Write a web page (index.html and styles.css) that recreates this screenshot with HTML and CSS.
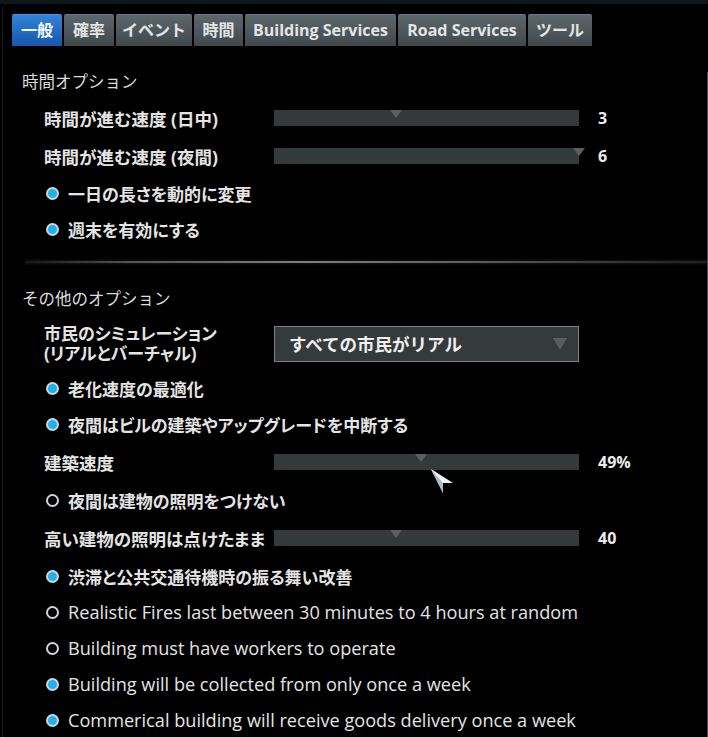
FILE: index.html
```html
<!DOCTYPE html>
<html lang="ja">
<head>
<meta charset="utf-8">
<title>Options</title>
<link rel="stylesheet" href="styles.css">
</head>
<body>
<div class="window">
  <div class="topbar"></div>
  <div class="frame">
    <nav class="tabs">
      <span class="tab tab-general active">一般</span>
      <span class="tab tab-prob">確率</span>
      <span class="tab tab-event">イベント</span>
      <span class="tab tab-time">時間</span>
      <span class="tab tab-building">Building Services</span>
      <span class="tab tab-road">Road Services</span>
      <span class="tab tab-tools">ツール</span>
    </nav>
    <div class="content">
      <h2 class="section-title">時間オプション</h2>
      <div class="row slider-row">
        <span class="label">時間が進む速度 (日中)</span>
        <div class="slider"><span class="thumb" style="left:40%"></span></div>
        <span class="value">3</span>
      </div>
      <div class="row slider-row">
        <span class="label">時間が進む速度 (夜間)</span>
        <div class="slider"><span class="thumb" style="left:100%"></span></div>
        <span class="value">6</span>
      </div>
      <div class="row check-row">
        <span class="radio on"></span><span class="check-text">一日の長さを動的に変更</span>
      </div>
      <div class="row check-row">
        <span class="radio on"></span><span class="check-text">週末を有効にする</span>
      </div>

      <div class="divider"></div>

      <h2 class="section-title second">その他のオプション</h2>
      <div class="row select-row">
        <div class="label-stack">
          <span class="stack-line">市民のシミュレーション</span>
          <span class="stack-line">(リアルとバーチャル)</span>
        </div>
        <div class="select">
          <span class="select-text">すべての市民がリアル</span>
          <span class="select-arrow"></span>
        </div>
      </div>
      <div class="row check-row">
        <span class="radio on"></span><span class="check-text">老化速度の最適化</span>
      </div>
      <div class="row check-row">
        <span class="radio on"></span><span class="check-text">夜間はビルの建築やアップグレードを中断する</span>
      </div>
      <div class="row slider-row tall">
        <span class="label">建築速度</span>
        <div class="slider"><span class="thumb" style="left:48.3%"></span></div>
        <span class="value">49%</span>
      </div>
      <div class="row check-row">
        <span class="radio"></span><span class="check-text">夜間は建物の照明をつけない</span>
      </div>
      <div class="row slider-row tall">
        <span class="label">高い建物の照明は点けたままにする</span>
        <div class="slider"><span class="thumb" style="left:40%"></span></div>
        <span class="value">40</span>
      </div>
      <div class="row check-row">
        <span class="radio on"></span><span class="check-text">渋滞と公共交通待機時の振る舞い改善</span>
      </div>
      <div class="row check-row">
        <span class="radio"></span><span class="check-text en">Realistic Fires last between 30 minutes to 4 hours at random</span>
      </div>
      <div class="row check-row">
        <span class="radio"></span><span class="check-text en">Building must have workers to operate</span>
      </div>
      <div class="row check-row">
        <span class="radio on"></span><span class="check-text en">Building will be collected from only once a week</span>
      </div>
      <div class="row check-row">
        <span class="radio on"></span><span class="check-text en">Commerical building will receive goods delivery once a week</span>
      </div>
    </div>
  </div>
  <svg class="cursor" width="26" height="28" viewBox="0 0 26 28">
    <polygon points="3,3 25,17 15,17 15,27" fill="#f2f5f7"/>
    <polygon points="3,3 15,17 15,27" fill="#a9bccb"/>
  </svg>
</div>
</body>
</html>
```

FILE: styles.css
```css
* { box-sizing: border-box; }

body {
  margin: 0;
  background: #000;
  font-family: "Open Sans", "Noto Sans CJK JP", sans-serif;
  color: #e2e2e2;
}

.window {
  position: relative;
  width: 708px;
  height: 737px;
  overflow: hidden;
  background: #000;
}

.window::after {
  content: "";
  position: absolute;
  right: 0;
  top: 72px;
  bottom: 0;
  width: 1px;
  background: #4c5153;
}

.topbar {
  height: 4px;
  background: #0f171b;
}

.frame {
  margin-left: 2px;
  border-left: 1px solid #161b1e;
  border-top-left-radius: 6px;
  height: 733px;
}

.tabs {
  display: flex;
  gap: 2px;
  padding: 10px 0 0 9px;
}

.tab {
  flex: none;
  height: 32px;
  line-height: 31px;
  text-align: center;
  font-size: 16px;
  font-weight: 700;
  color: #e2e5e5;
  background: linear-gradient(#5d676b, #40484c);
  border-top: 1px solid #6f787c;
  border-radius: 2px 2px 0 0;
  white-space: nowrap;
}

.tab.active {
  background: linear-gradient(#3183da, #1856ab);
  border-top-color: #4a92e0;
  color: #fff;
}

.tab-general { width: 50px; }
.tab-prob { width: 50px; }
.tab-event { width: 76px; }
.tab-time { width: 49px; }
.tab-building { width: 151px; }
.tab-road { width: 128px; }
.tab-tools { width: 64px; }

.content {
  padding-left: 19px;
}

.section-title {
  margin: 24px 0 5px;
  font-size: 16.5px;
  font-weight: 400;
  line-height: 24px;
  color: #dcdcdc;
}

.section-title.second {
  margin: 24px 0 6px;
}

.row {
  display: flex;
  align-items: center;
  padding-left: 22px;
}

.slider-row { height: 38px; }
.slider-row.tall { height: 40px; }
.check-row { height: 36px; }
.select-row { height: 53px; }

.label {
  width: 221px;
  margin-right: 9px;
  padding: 4px 0;
  overflow: hidden;
  white-space: nowrap;
  font-size: 17.5px;
  font-weight: 700;
  color: #e4e4e4;
  font-feature-settings: "palt";
}

.label-stack {
  display: flex;
  flex-direction: column;
  width: 221px;
  margin-right: 9px;
  font-size: 17px;
  font-weight: 700;
  color: #e4e4e4;
  font-feature-settings: "palt";
  white-space: nowrap;
}

.stack-line {
  display: block;
  height: 20px;
  line-height: 20px;
}

.slider {
  position: relative;
  flex: none;
  width: 305px;
  height: 16px;
  background: #343a3a;
}

.thumb {
  position: absolute;
  top: 0;
  width: 0;
  height: 0;
  border-left: 6px solid transparent;
  border-right: 6px solid transparent;
  border-top: 8px solid #5a6060;
  transform: translateX(-50%);
}

.value {
  margin-left: 19px;
  font-size: 16px;
  font-weight: 700;
  color: #ececec;
}

.radio {
  width: 13px;
  height: 13px;
  margin-left: 2px;
  margin-right: 9px;
  border-radius: 50%;
  border: 2.5px solid #cfd5d8;
  background: #000;
  flex: none;
}

.radio.on {
  border-width: 2px;
  background: #1fb0ef;
}

.check-text {
  font-size: 17px;
  font-weight: 700;
  color: #e4e4e4;
  white-space: nowrap;
  font-feature-settings: "palt";
}

.check-text.en {
  font-size: 18.15px;
  font-weight: 400;
  font-feature-settings: normal;
}

.divider {
  height: 2px;
  margin: 14px 0 0 3px;
  background: linear-gradient(to right, #141719 0%, #4e5355 15%, #7a7f80 40%, #5a5f61 65%, #2c3133 90%, #1c2022 100%);
  box-shadow: 0 0 3px rgba(120, 125, 128, 0.35);
}

.select {
  display: flex;
  flex: none;
  align-items: center;
  justify-content: space-between;
  width: 305px;
  height: 36px;
  padding: 0 11px 0 14px;
  background: #353a3a;
  border: 1.5px solid #7b8282;
}

.select-text {
  font-size: 17.5px;
  font-weight: 700;
  color: #f0f0f0;
}

.select-arrow {
  width: 0;
  height: 0;
  border-left: 7px solid transparent;
  border-right: 7px solid transparent;
  border-top: 12px solid #595f5f;
}

.cursor {
  position: absolute;
  left: 428px;
  top: 466px;
}
```
